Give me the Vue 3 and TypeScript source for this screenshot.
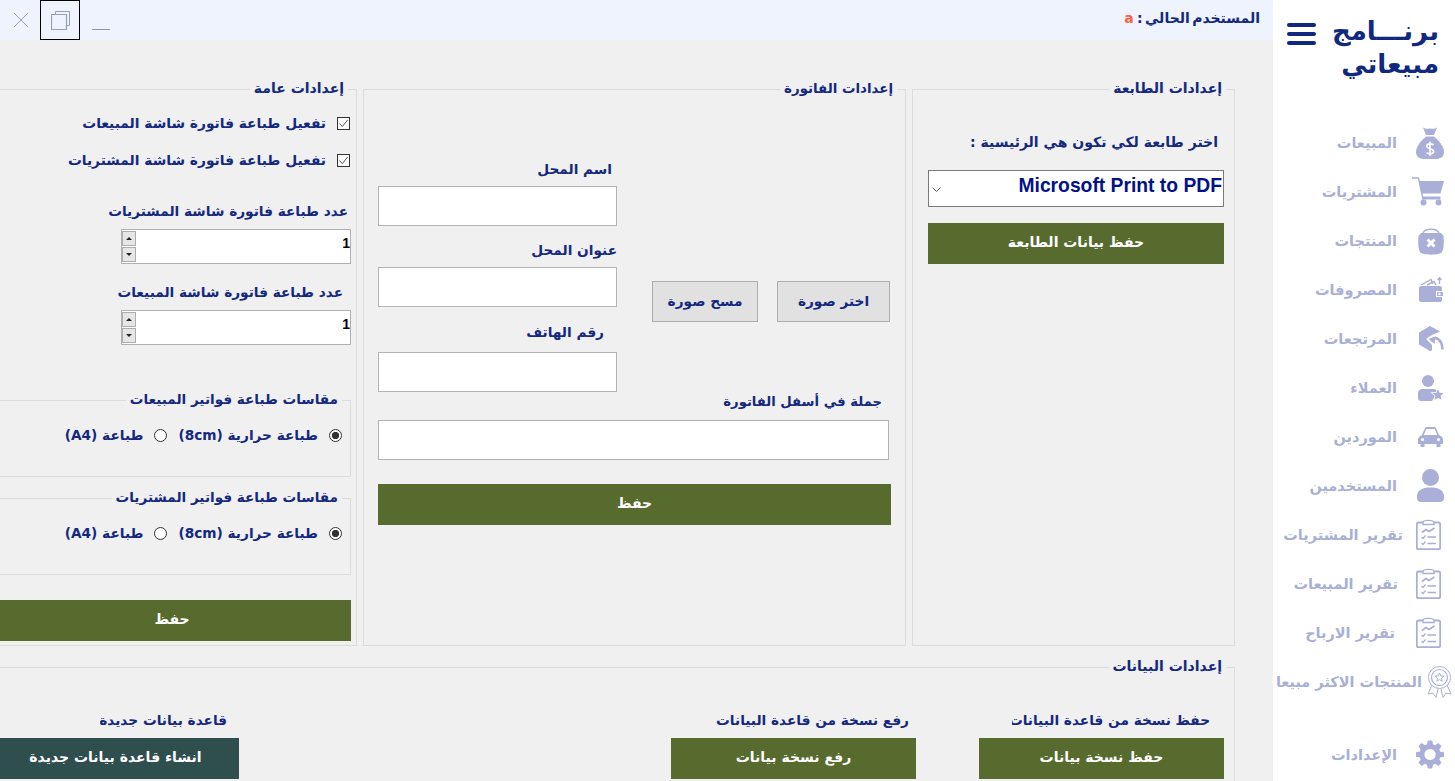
<script setup lang="ts">
interface Shape { d: string; fill?: string; stroke?: string; sw?: number }
interface Icon { w: number; h: number; shapes: Shape[] }
interface NavItem { label: string; icon: Icon; gap: number; inset: number; spaced?: boolean }

const tint = '#a9afd6'
const paper = '#ffffff'

const circ = (cx: number, cy: number, r: number): string =>
  `M${cx - r} ${cy}a${r} ${r} 0 1 0 ${r * 2} 0a${r} ${r} 0 1 0 ${-r * 2} 0Z`

const star = (cx: number, cy: number, r: number): string => {
  const pts: string[] = []
  for (let i = 0; i < 10; i++) {
    const rad = i % 2 ? r * 0.45 : r
    const a = (Math.PI / 5) * i - Math.PI / 2
    pts.push(`${(cx + rad * Math.cos(a)).toFixed(2)} ${(cy + rad * Math.sin(a)).toFixed(2)}`)
  }
  return `M${pts.join('L')}Z`
}

const gear = (cx: number, cy: number, outer: number, inner: number, teeth: number): string => {
  const pts: string[] = []
  const step = (Math.PI * 2) / teeth
  for (let i = 0; i < teeth; i++) {
    const a = i * step
    const list: [number, number][] = [
      [a - step * 0.36, inner],
      [a - step * 0.2, outer],
      [a + step * 0.2, outer],
      [a + step * 0.36, inner],
    ]
    for (const [t, r] of list) {
      pts.push(`${(cx + r * Math.cos(t)).toFixed(2)} ${(cy + r * Math.sin(t)).toFixed(2)}`)
    }
  }
  return `M${pts.join('L')}Z`
}

const bag: Icon = { w: 28, h: 32, shapes: [
  { d: 'M7 0.5C10 2.5 12 1.5 14 1.5C16 1.5 18 2.5 21 0.5L18 8H10Z', fill: tint },
  { d: 'M10 9.5H18C22 13 28 19 28 25C28 30 24 32 20 32H8C4 32 0 30 0 25C0 19 6 13 10 9.5Z', fill: tint },
  { d: 'M17.5 18C16 16.3 10.8 16.3 10.8 19.3C10.8 22.3 17.6 21.3 17.6 24.4C17.6 27.3 12 27.3 10.5 25.6M14 14.8V28.8', stroke: paper, sw: 1.6, fill: 'none' },
] }

const cart: Icon = { w: 32, h: 29, shapes: [
  { d: 'M0 1H6.5L10.5 20', stroke: tint, sw: 1.4, fill: 'none' },
  { d: 'M7 4H32L28.5 16.5H10Z', fill: tint },
  { d: 'M10 19.5H28.5V22.5H10Z', fill: tint },
  { d: circ(11.5, 25.5, 3), fill: tint },
  { d: circ(26.5, 25.5, 3), fill: tint },
] }

const basket: Icon = { w: 26, h: 28, shapes: [
  { d: 'M5 6C7 1 19 1 21 6', stroke: tint, sw: 1.6, fill: 'none' },
  { d: 'M3 6H23L25.5 9C26 15 26 21 24 25C22.5 28.5 3.5 28.5 2 25C0 21 0 15 0.5 9Z', fill: tint },
  { d: 'M9.5 12.5L16.5 19.5M16.5 12.5L9.5 19.5', stroke: paper, sw: 2.8, fill: 'none' },
] }

const wallet: Icon = { w: 25, h: 25, shapes: [
  { d: 'M2 8L12 2.5L14 7M8 8L15 4.5L17 8', stroke: tint, sw: 1.4, fill: 'none' },
  { d: 'M20.5 7V0.8M18.6 3L20.5 0.6L22.4 3', stroke: tint, sw: 1.4, fill: 'none' },
  { d: 'M2 9H21C22 9 23 10 23 11V23C23 24 22 25 21 25H2C1 25 0 24 0 23V11C0 10 1 9 2 9Z', fill: tint },
  { d: 'M17 14H25V20H17Z', fill: paper },
  { d: 'M18 15H24V19H18Z', fill: tint },
  { d: circ(20.5, 17, 1.2), fill: paper },
] }

const returns: Icon = { w: 26, h: 25, shapes: [
  { d: 'M12 0L22 5.5L13 9.5L8 13L14 19V24.5L12 25L1 18.5V6.5Z', fill: tint },
  { d: 'M14 14C17 10.5 24 12 24.5 23.5', stroke: tint, sw: 2.6, fill: 'none' },
  { d: 'M10.5 13L17.5 10.5L16.5 18Z', fill: tint },
] }

const customer: Icon = { w: 26, h: 26, shapes: [
  { d: circ(10, 6, 6), fill: tint },
  { d: 'M4 14H15C17 14 19 15 20 17L14 26H3C1 26 0 25 0 23V18C0 16 2 14 4 14Z', fill: tint },
  { d: star(20, 20, 8), fill: paper },
  { d: star(20, 20, 6), fill: tint },
] }

const car: Icon = { w: 25, h: 20, shapes: [
  { d: 'M4 8L7 1C7.3 0.4 7.8 0 8.5 0H16.5C17.2 0 17.7 0.4 18 1L21 8C24 9 25 11 25 13V17H22.5V20H18.5V17H6.5V20H2.5V17H0V13C0 11 1 9 4 8Z', fill: tint },
  { d: 'M5.8 8L8.3 2H16.7L19.2 8Z', fill: paper },
  { d: circ(4.5, 12.5, 1.6), fill: paper },
  { d: circ(20.5, 12.5, 1.6), fill: paper },
] }

const person: Icon = { w: 27, h: 33, shapes: [
  { d: circ(13.5, 8.5, 8.5), fill: tint },
  { d: 'M0 28C0 21 5 18.5 13.5 18.5C22 18.5 27 21 27 28V29C27 31.5 25 33 23 33H4C2 33 0 31.5 0 29Z', fill: tint },
] }

const clipboard: Icon = { w: 25, h: 31, shapes: [
  { d: 'M2.5 3.5H22.5C23.5 3.5 24.2 4.2 24.2 5.2V28.5C24.2 29.5 23.5 30.2 22.5 30.2H2.5C1.5 30.2 0.8 29.5 0.8 28.5V5.2C0.8 4.2 1.5 3.5 2.5 3.5Z', stroke: tint, sw: 1.8, fill: 'none' },
  { d: 'M7 3.5C7 0.6 18 0.6 18 3.5V5.5H7Z', stroke: tint, sw: 1.4, fill: paper },
  { d: 'M6 13.5L10 10.5L13 12.5L18.5 9', stroke: tint, sw: 1.6, fill: 'none' },
  { d: 'M5.5 18L7 19.5L9.5 16.5M5.5 24L7 25.5L9.5 22.5', stroke: tint, sw: 1.3, fill: 'none' },
  { d: 'M11.5 18H20M11.5 24.5H20', stroke: tint, sw: 1.6, fill: 'none' },
] }

const medal: Icon = { w: 25, h: 32, shapes: [
  { d: 'M5 19L1 28L6 27L9 31.5L11 23M20 19L24 28L19 27L16 31.5L14 23', stroke: tint, sw: 1, fill: paper },
  { d: circ(12.5, 11.5, 11), stroke: tint, sw: 1, fill: paper },
  { d: circ(12.5, 11.5, 8), stroke: tint, sw: 1.2, fill: 'none' },
  { d: star(12.5, 11.5, 4.6), stroke: tint, sw: 1, fill: 'none' },
] }

const cog: Icon = { w: 28, h: 29, shapes: [
  { d: gear(14, 14.5, 14.2, 10.6, 8), fill: tint },
  { d: circ(14, 14.5, 5.6), fill: paper },
] }

const nav: NavItem[] = [
  { label: 'المبيعات', icon: bag, gap: 19, inset: 11 },
  { label: 'المشتريات', icon: cart, gap: 15, inset: 11 },
  { label: 'المنتجات', icon: basket, gap: 21, inset: 11 },
  { label: 'المصروفات', icon: wallet, gap: 22, inset: 11 },
  { label: 'المرتجعات', icon: returns, gap: 21, inset: 11 },
  { label: 'العملاء', icon: customer, gap: 21, inset: 11 },
  { label: 'الموردين', icon: car, gap: 21, inset: 12 },
  { label: 'المستخدمين', icon: person, gap: 20, inset: 11 },
  { label: 'تقرير المشتريات', icon: clipboard, gap: 13, inset: 14 },
  { label: 'تقرير المبيعات', icon: clipboard, gap: 18, inset: 14 },
  { label: 'تقرير الارباح', icon: clipboard, gap: 21, inset: 14 },
  { label: 'المنتجات الاكثر مبيعا', icon: medal, gap: 5, inset: 3 },
  { label: 'الإعدادات', icon: cog, gap: 19, inset: 11, spaced: true },
]

const invoiceFields = [
  { label: 'اسم المحل', cls: 'f1' },
  { label: 'عنوان المحل', cls: 'f2' },
  { label: 'رقم الهاتف', cls: 'f3' },
]

const sizeGroups = ['مقاسات طباعة فواتير المبيعات', 'مقاسات طباعة فواتير المشتريات']

const dataCols = [
  { label: 'حفظ نسخة من قاعدة البيانات', button: 'حفظ نسخة بيانات', cls: 'c1' },
  { label: 'رفع نسخة من قاعدة البيانات', button: 'رفع نسخة بيانات', cls: 'c2' },
  { label: 'قاعدة بيانات جديدة', button: 'انشاء قاعدة بيانات جديدة', cls: 'c3' },
]
</script>

<template>
  <div class="app" dir="rtl">
    <aside class="side">
      <div class="brand">
        <div class="logo">
          <span>برنـــامج</span>
          <span>مبيعاتي</span>
        </div>
        <div class="burger"><i></i><i></i><i></i></div>
      </div>
      <nav class="nav">
        <a
          v-for="item in nav"
          :key="item.label"
          class="nav-item"
          :class="{ spaced: item.spaced }"
          :style="{ gap: item.gap + 'px', paddingRight: item.inset + 'px' }"
        >
          <svg :width="item.icon.w" :height="item.icon.h" :viewBox="`0 0 ${item.icon.w} ${item.icon.h}`">
            <path
              v-for="(s, i) in item.icon.shapes"
              :key="i"
              :d="s.d"
              :fill="s.fill"
              :stroke="s.stroke"
              :stroke-width="s.sw"
            />
          </svg>
          <span>{{ item.label }}</span>
        </a>
      </nav>
    </aside>

    <main class="main">
      <header class="top">
        <div class="user">المستخدم الحالي : <b>a</b></div>
        <div class="win">
          <button class="win-btn" type="button" aria-label="minimize">
            <svg width="18" height="1" viewBox="0 0 18 1" class="min"><path d="M0 0.5H18" stroke="#8f93b0" /></svg>
          </button>
          <button class="win-btn active" type="button" aria-label="restore">
            <svg width="19" height="19" viewBox="0 0 19 19">
              <path d="M4.5 3V0.5H18.5V14.5H15.5" fill="none" stroke="#9a9db8" />
              <path d="M0.5 3.5H15.5V18.5H0.5Z" fill="none" stroke="#9a9db8" stroke-width="1.2" />
            </svg>
          </button>
          <button class="win-btn close" type="button" aria-label="close">
            <svg width="16" height="16" viewBox="0 0 16 16"><path d="M1 1L15 15M15 1L1 15" stroke="#9a9db8" /></svg>
          </button>
        </div>
      </header>

      <section class="panels">
        <fieldset class="panel">
          <legend>إعدادات الطابعة</legend>
          <div class="print">
            <div class="lbl print-lbl">اختر طابعة لكي تكون هي الرئيسية :</div>
            <div class="select">
              <span>Microsoft Print to PDF</span>
              <svg width="9" height="5" viewBox="0 0 9 5"><path d="M0.5 0.5L4.5 4.5L8.5 0.5" fill="none" stroke="#555" /></svg>
            </div>
            <button class="btn print-btn" type="button">حفظ بيانات الطابعة</button>
          </div>
        </fieldset>

        <fieldset class="panel">
          <legend class="tight">إعدادات الفاتورة</legend>
          <div class="invoice">
            <div class="invoice-top">
              <div class="img-btns">
                <button class="btn-gray pick" type="button">اختر صورة</button>
                <button class="btn-gray wipe" type="button">مسح صورة</button>
              </div>
              <div class="fields">
                <template v-for="f in invoiceFields" :key="f.cls">
                  <div class="lbl" :class="f.cls">{{ f.label }}</div>
                  <input class="text-in" type="text" />
                </template>
              </div>
            </div>
            <div class="lbl note-lbl">جملة في أسفل الفاتورة</div>
            <input class="text-in note-in" type="text" />
            <button class="btn note-btn" type="button">حفظ</button>
          </div>
        </fieldset>

        <fieldset class="panel">
          <legend>إعدادات عامة</legend>
          <div class="general">
            <label class="check first"><span class="box"><svg width="11" height="11" viewBox="0 0 11 11"><path d="M1.5 5.5L4.3 8.6L9.6 2" fill="none" stroke="#555" /></svg></span>تفعيل طباعة فاتورة شاشة المبيعات</label>
            <label class="check"><span class="box"><svg width="11" height="11" viewBox="0 0 11 11"><path d="M1.5 5.5L4.3 8.6L9.6 2" fill="none" stroke="#555" /></svg></span>تفعيل طباعة فاتورة شاشة المشتريات</label>

            <div class="lbl count1">عدد طباعة فاتورة شاشة المشتريات</div>
            <div class="spin">
              <span class="val">1</span>
              <span class="arrows"><i class="up"></i><i class="down"></i></span>
            </div>
            <div class="lbl count2">عدد طباعة فاتورة شاشة المبيعات</div>
            <div class="spin">
              <span class="val">1</span>
              <span class="arrows"><i class="up"></i><i class="down"></i></span>
            </div>

            <fieldset v-for="(g, i) in sizeGroups" :key="g" class="sub" :class="{ firstsub: i === 0 }">
              <legend>{{ g }}</legend>
              <div class="radios">
                <label class="radio"><span class="dot on"></span>طباعة حرارية (8cm)</label>
                <label class="radio"><span class="dot"></span>طباعة (A4)</label>
              </div>
            </fieldset>

            <button class="btn general-btn" type="button">حفظ</button>
          </div>
        </fieldset>
      </section>

      <fieldset class="panel data">
        <legend>إعدادات البيانات</legend>
        <div class="data-row">
          <div v-for="c in dataCols" :key="c.cls" class="data-col" :class="c.cls">
            <div class="lbl data-lbl">{{ c.label }}</div>
            <button class="btn" type="button">{{ c.button }}</button>
          </div>
        </div>
      </fieldset>
    </main>
  </div>
</template>

<style>
html, body { margin: 0; padding: 0; overflow: hidden; background: #f0f0f0; }
</style>

<style scoped>
.app {
  display: flex;
  width: 1455px;
  height: 781px;
  overflow: hidden;
  font-family: "DejaVu Sans", "Noto Sans", sans-serif;
  font-weight: 700;
  font-size: 14px;
  color: #14287e;
  background: #f0f0f0;
}
.side {
  flex: 0 0 182px;
  width: 182px;
  min-width: 0;
  overflow: hidden;
  background: #fff;
  display: flex;
  flex-direction: column;
}
.brand {
  height: 118px;
  display: flex;
  justify-content: space-between;
  padding: 0 16px 0 14px;
  box-sizing: border-box;
}
.logo {
  display: flex;
  flex-direction: column;
  padding-top: 15px;
  font-size: 26px;
  line-height: 33px;
  color: #10297f;
  white-space: nowrap;
}
.burger {
  display: flex;
  flex-direction: column;
  gap: 5px;
  margin-top: 23px;
  width: 29px;
}
.burger i {
  display: block;
  height: 4px;
  border-radius: 2px;
  background: #10297f;
}
.nav { display: flex; flex-direction: column; }
.nav-item {
  height: 49px;
  display: flex;
  align-items: center;
  color: #a9afd6;
  font-size: 14.5px;
  white-space: nowrap;
}
.nav-item svg { flex: none; }
.nav-item.spaced { margin-top: 24px; }

.main {
  flex: 1;
  min-width: 0;
  overflow: hidden;
  display: flex;
  flex-direction: column;
}
.top {
  flex: 0 0 40px;
  background: #eff3fe;
  display: flex;
  align-items: center;
  justify-content: space-between;
  padding-right: 13px;
}
.user { font-size: 14px; color: #14287e; padding-bottom: 4px; white-space: nowrap; word-spacing: -2.5px; }
.user b { color: #ff6347; margin-right: 1px; }
.win { display: flex; height: 40px; }
.win-btn {
  width: 40px;
  height: 40px;
  padding: 0;
  border: 0;
  background: none;
  display: flex;
  align-items: center;
  justify-content: center;
}
.win-btn.active { border: 1px solid #000; box-sizing: border-box; }
.win-btn .min { margin-top: 18px; margin-left: 2px; }
.win-btn.close { padding-left: 2px; box-sizing: border-box; }

fieldset {
  margin: 0;
  padding: 0;
  min-width: 0;
  border: 1px solid #dcdcdc;
}
legend {
  height: 18px;
  line-height: 17px;
  padding: 0 4px;
  margin-right: 8px;
  font-size: 14px;
  white-space: nowrap;
}
legend.tight { font-size: 13.4px; }
.panels {
  display: grid;
  grid-template-columns: 323px 543px 369px;
  gap: 6px;
  margin-top: 40px;
  padding-right: 38px;
  height: 566px;
}
.panel { height: 566px; box-sizing: border-box; }
.data { margin: 12px 38px 0 -20px; height: 200px; flex: none; }

.lbl { font-size: 13.7px; line-height: 20px; height: 20px; white-space: nowrap; }

.btn {
  display: block;
  width: 100%;
  height: 41px;
  padding: 0 0 3px;
  border: 0;
  background: #576b2f;
  color: #fff;
  font: inherit;
  font-size: 14px;
}
.btn-gray {
  height: 41px;
  padding: 0 0 2px;
  border: 1px solid #adadad;
  background: #e1e1e1;
  color: #14287e;
  font: inherit;
  font-size: 13.7px;
}
.text-in {
  display: block;
  box-sizing: border-box;
  width: 239px;
  height: 40px;
  border: 1px solid #b4b4b4;
  background: #fff;
  padding: 0;
}

.print { padding: 0 10px 0 15px; }
.print-lbl { margin: 34px 6px 0 0; font-size: 14px; }
.select {
  box-sizing: border-box;
  height: 37px;
  margin-top: 18px;
  border: 1px solid #7a7a7a;
  background: #fff;
  display: flex;
  align-items: center;
  justify-content: space-between;
  padding: 0 1px 5px 3px;
  font-family: "Liberation Sans", sans-serif;
  font-size: 19.3px;
  color: #00128a;
}
.select svg { margin-left: 0; margin-top: 7px; }
.print-btn { margin-top: 16px; }

.invoice { padding: 0 14px; }
.invoice-top {
  display: grid;
  grid-template-columns: 1fr 239px;
  margin-top: 61px;
}
.img-btns {
  display: flex;
  justify-content: space-between;
  align-items: flex-start;
  padding: 122px 1px 0 35px;
}
.pick { width: 113px; }
.wipe { width: 106px; }
.fields .text-in { margin-top: 7px; }
.fields .f1 { margin-right: 5px; }
.fields .f2 { margin-top: 14px; }
.fields .f3 { margin-top: 15px; margin-right: 13px; }
.fields .f3 + .text-in { margin-top: 10px; }
.note-lbl { margin-right: 9px; font-size: 13.2px; }
.note-in { width: 511px; margin: 8px 2px 0 0; }
.note-btn { margin-top: 24px; }

.general { padding: 0 5px 0 0; }
.check {
  display: flex;
  align-items: center;
  gap: 11px;
  height: 24px;
  margin: 13px 1px 0 0;
  font-size: 13.8px;
  white-space: nowrap;
}
.box {
  flex: none;
  box-sizing: border-box;
  width: 13px;
  height: 13px;
  border: 1px solid #333;
  background: #fff;
  display: flex;
  align-items: center;
  justify-content: center;
}
.count1 { margin: 29px 3px 0 0; }
.count2 { margin: 18px 8px 0 0; }
.spin {
  box-sizing: border-box;
  width: 230px;
  height: 35px;
  margin-top: 8px;
  border: 1px solid #b0b0b0;
  background: #fff;
  display: flex;
  align-items: flex-start;
  justify-content: space-between;
  font-family: "Liberation Sans", sans-serif;
  font-size: 14px;
  color: #000;
}
.val { margin-top: 5px; margin-right: 0; }
.arrows { display: flex; flex-direction: column; gap: 1px; margin: 1px 1px 0 0; }
.arrows i {
  display: flex;
  width: 14px;
  height: 15px;
  box-sizing: border-box;
  border: 1px solid #adadad;
  background: #e6e6e6;
  align-items: center;
  justify-content: center;
}
.arrows i::after {
  content: "";
  border-left: 3px solid transparent;
  border-right: 3px solid transparent;
}
.arrows .up::after { border-bottom: 3px solid #222; }
.arrows .down::after { border-top: 3px solid #222; }

.sub { margin-top: 12px; height: 86px; box-sizing: border-box; width: 400px; }
.sub.firstsub { margin-top: 46px; }
.sub legend { margin-right: 8px; font-size: 13.6px; }
.radios {
  display: flex;
  gap: 11px;
  padding: 16px 8px 0 0;
  height: 20px;
}
.radio {
  display: flex;
  align-items: center;
  gap: 11px;
  white-space: nowrap;
  font-size: 13.7px;
}
.dot {
  flex: none;
  box-sizing: border-box;
  width: 13px;
  height: 13px;
  border: 1px solid #333;
  border-radius: 50%;
  background: #fff;
}
.dot.on { background: radial-gradient(circle, #333 0 3.4px, #fff 3.9px); }
.general-btn { margin-top: 25px; width: 358px; }

.data-row {
  display: flex;
  padding: 0 10px 0 0;
  margin-top: 34px;
}
.data-col { flex: none; }
.data-lbl { overflow: hidden; }
.data-col .btn { margin-top: 8px; }
.c1 { width: 245px; }
.c1 .data-lbl { margin-right: 14px; width: 198px; }
.c2 { width: 245px; margin-right: 63px; }
.c2 .data-lbl { margin-right: 7px; }
.c3 { width: 247px; margin-right: 432px; }
.c3 .data-lbl { margin-right: 12px; width: 127px; }
.c3 .btn { background: #2f4f4f; }
</style>
